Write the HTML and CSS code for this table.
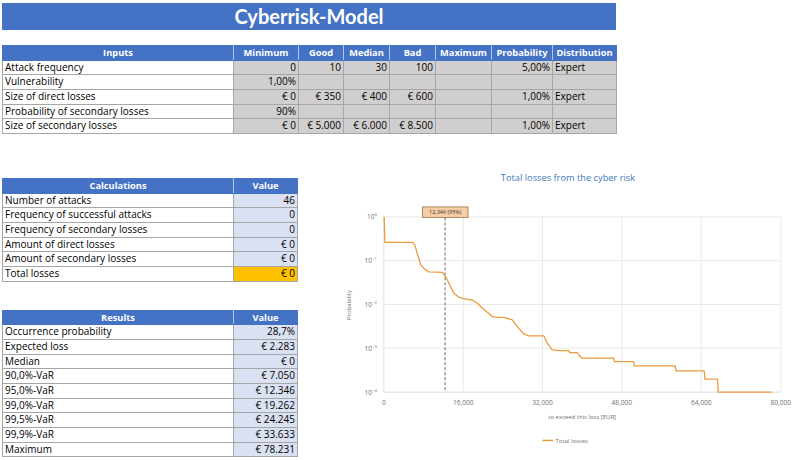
FILE: index.html
```html
<!DOCTYPE html>
<html lang="en">
<head>
<meta charset="utf-8">
<title>Cyberrisk-Model</title>
<link rel="stylesheet" href="styles.css">
</head>
<body>
<div class="sheet">
  <h1 class="title">Cyberrisk-Model</h1>

  <table class="grid inputs">
    <colgroup>
      <col class="w-label"><col style="width:65px"><col style="width:45px"><col style="width:46px"><col style="width:46px"><col style="width:56px"><col style="width:61px"><col style="width:64px">
    </colgroup>
    <thead>
      <tr><th>Inputs</th><th>Minimum</th><th>Good</th><th>Median</th><th>Bad</th><th>Maximum</th><th>Probability</th><th>Distribution</th></tr>
    </thead>
    <tbody>
      <tr><td class="lbl">Attack frequency</td><td class="num">0</td><td class="num">10</td><td class="num">30</td><td class="num">100</td><td class="num"></td><td class="num">5,00%</td><td class="txt">Expert</td></tr>
      <tr><td class="lbl">Vulnerability</td><td class="num">1,00%</td><td class="num"></td><td class="num"></td><td class="num"></td><td class="num"></td><td class="num"></td><td class="txt"></td></tr>
      <tr><td class="lbl">Size of direct losses</td><td class="num">€ 0</td><td class="num">€ 350</td><td class="num">€ 400</td><td class="num">€ 600</td><td class="num"></td><td class="num">1,00%</td><td class="txt">Expert</td></tr>
      <tr><td class="lbl">Probability of secondary losses</td><td class="num">90%</td><td class="num"></td><td class="num"></td><td class="num"></td><td class="num"></td><td class="num"></td><td class="txt"></td></tr>
      <tr><td class="lbl">Size of secondary losses</td><td class="num">€ 0</td><td class="num">€ 5.000</td><td class="num">€ 6.000</td><td class="num">€ 8.500</td><td class="num"></td><td class="num">1,00%</td><td class="txt">Expert</td></tr>
    </tbody>
  </table>

  <div class="lower">
    <div class="left">
      <table class="grid calc">
        <colgroup><col class="w-label"><col class="w-value"></colgroup>
        <thead><tr><th>Calculations</th><th>Value</th></tr></thead>
        <tbody>
          <tr><td class="lbl">Number of attacks</td><td class="val">46</td></tr>
          <tr><td class="lbl">Frequency of successful attacks</td><td class="val">0</td></tr>
          <tr><td class="lbl">Frequency of secondary losses</td><td class="val">0</td></tr>
          <tr><td class="lbl">Amount of direct losses</td><td class="val">€ 0</td></tr>
          <tr><td class="lbl">Amount of secondary losses</td><td class="val">€ 0</td></tr>
          <tr><td class="lbl">Total losses</td><td class="val total">€ 0</td></tr>
        </tbody>
      </table>

      <table class="grid results">
        <colgroup><col class="w-label"><col class="w-value"></colgroup>
        <thead><tr><th>Results</th><th>Value</th></tr></thead>
        <tbody>
          <tr><td class="lbl">Occurrence probability</td><td class="val">28,7%</td></tr>
          <tr><td class="lbl">Expected loss</td><td class="val">€ 2.283</td></tr>
          <tr><td class="lbl">Median</td><td class="val">€ 0</td></tr>
          <tr><td class="lbl">90,0%-VaR</td><td class="val">€ 7.050</td></tr>
          <tr><td class="lbl">95,0%-VaR</td><td class="val">€ 12.346</td></tr>
          <tr><td class="lbl">99,0%-VaR</td><td class="val">€ 19.262</td></tr>
          <tr><td class="lbl">99,5%-VaR</td><td class="val">€ 24.245</td></tr>
          <tr><td class="lbl">99,9%-VaR</td><td class="val">€ 33.633</td></tr>
          <tr><td class="lbl">Maximum</td><td class="val">€ 78.231</td></tr>
        </tbody>
      </table>
    </div>

    <svg class="chart" width="470" height="295" viewBox="0 0 470 295" xmlns="http://www.w3.org/2000/svg">
      <text class="c-title" x="237.5" y="16" text-anchor="middle">Total losses from the cyber risk</text>

      <g class="gridlines">
        <line x1="132.5" y1="51.7" x2="132.5" y2="227.3"/>
        <line x1="212" y1="51.7" x2="212" y2="227.3"/>
        <line x1="291.5" y1="51.7" x2="291.5" y2="227.3"/>
        <line x1="371" y1="51.7" x2="371" y2="227.3"/>
        <line x1="450.7" y1="51.7" x2="450.7" y2="227.3"/>
        <line x1="53" y1="51.7" x2="450.7" y2="51.7"/>
        <line x1="53" y1="95.5" x2="450.7" y2="95.5"/>
        <line x1="53" y1="139.5" x2="450.7" y2="139.5"/>
        <line x1="53" y1="183.3" x2="450.7" y2="183.3"/>
      </g>
      <g class="axes">
        <line x1="53" y1="51.7" x2="53" y2="227.3"/>
        <line x1="53" y1="227.3" x2="450.7" y2="227.3"/>
      </g>

      <g class="ylab" text-anchor="end">
        <text x="46" y="54">10<tspan class="sup" dy="-3">0</tspan></text>
        <text x="46" y="98">10<tspan class="sup" dy="-3">−1</tspan></text>
        <text x="46" y="142">10<tspan class="sup" dy="-3">−2</tspan></text>
        <text x="46" y="186">10<tspan class="sup" dy="-3">−3</tspan></text>
        <text x="46" y="230">10<tspan class="sup" dy="-3">−4</tspan></text>
      </g>
      <g class="xlab" text-anchor="middle">
        <text x="53" y="240">0</text>
        <text x="132.5" y="240">16,000</text>
        <text x="212" y="240">32,000</text>
        <text x="291.5" y="240">48,000</text>
        <text x="371" y="240">64,000</text>
        <text x="450.7" y="240">80,000</text>
      </g>
      <text class="axis-title" x="251.7" y="254" text-anchor="middle">to exceed this loss [EUR]</text>
      <text class="axis-title" transform="translate(20.5 140) rotate(-90)" text-anchor="middle">Probability</text>

      <line class="marker" x1="114.3" y1="52.3" x2="114.3" y2="227.3"/>

      <polyline class="curve" points="53.3,51.7 54,76.7 54,77.3 81.7,77.3 84,80 87,90 90,100 95,105 98,106.7 111.7,107.3 115,111.7 119,120 123.3,128.3 128,132 131.7,133.3 141.7,135 146.7,138.3 151.7,143.3 160,150 161.7,151.7 166.7,152.3 173.3,152.3 181.7,155 186.7,161.7 193.3,169 198.3,171 213.3,171 216.7,178.3 221.7,185 230,185.7 238.3,185.7 239.3,187.7 246.7,187.7 248.3,190 251.7,193.3 283.3,193.3 284,196.7 303.3,196.7 304,201 345,201 345.7,206 374,206 374.7,214.3 387.3,214.3 388,227.3 441.7,227.3"/>

      <rect class="tag" x="91.7" y="41.7" width="45.6" height="10.6"/>
      <text class="tag-text" x="114.5" y="49.2" text-anchor="middle">12,346 (95%)</text>

      <line class="legend-line" x1="211.7" y1="275.7" x2="222.7" y2="275.7"/>
      <text class="legend-text" x="225" y="278">Total losses</text>
    </svg>
  </div>
</div>
</body>
</html>
```

FILE: styles.css
```css
html, body {
  margin: 0;
  padding: 0;
  background: #ffffff;
}

body {
  font-family: "Open Sans", "Lato", "Liberation Sans", sans-serif;
  font-size: 10px;
  color: #000000;
}

.sheet {
  padding: 3px 0 0 2px;
}

.title {
  margin: 0;
  width: 614px;
  height: 27px;
  line-height: 27px;
  background: #4472c4;
  color: #ffffff;
  font-family: "Lato", "Open Sans", sans-serif;
  font-size: 20px;
  font-weight: bold;
  text-align: center;
}

.grid {
  border-collapse: collapse;
  table-layout: fixed;
}

.grid th,
.grid td {
  padding: 0 2px;
  line-height: 13.67px;
  height: 13.67px;
  white-space: nowrap;
  overflow: hidden;
  border: 1px solid #a6a6a6;
}

.grid th {
  background: #4472c4;
  color: #ffffff;
  font-size: 9.3px;
  font-weight: bold;
  text-align: center;
  border-color: #4472c4 #b4c6e7;
}

.grid th:first-child {
  border-left-color: #4472c4;
}

.grid th:last-child {
  border-right-color: #4472c4;
}

.w-label {
  width: 231px;
}

.w-value {
  width: 64px;
}

.inputs {
  width: 614px;
  margin-top: 15px;
}

.lbl {
  text-align: left;
  background: #ffffff;
}

.num {
  text-align: right;
  background: #d0cece;
}

.txt {
  text-align: left;
  background: #d0cece;
}

.val {
  text-align: right;
  background: #dae1f2;
}

.val.total {
  background: #ffc000;
}

.lower {
  display: flex;
  align-items: flex-start;
  margin-top: 31px;
}

.left {
  display: flex;
  flex-direction: column;
  padding-top: 13px;
}

.calc,
.results {
  width: 295px;
}

.results {
  margin-top: 28px;
}

.chart {
  display: block;
  margin-left: 33px;
  font-family: "Open Sans", "Lato", sans-serif;
}

.c-title {
  font-size: 9.3px;
  fill: #3d7bbd;
}

.gridlines line {
  stroke: #e3e3e3;
  stroke-width: 0.8;
}

.axes line {
  stroke: #d4d4d4;
  stroke-width: 0.8;
}

.ylab text,
.xlab text {
  font-size: 6.6px;
  fill: #707070;
}

.ylab .sup {
  font-size: 4.3px;
}

.axis-title {
  font-size: 6px;
  fill: #707070;
}

.marker {
  stroke: #555555;
  stroke-width: 0.9;
  stroke-dasharray: 3 2;
}

.curve {
  fill: none;
  stroke: #ee9a3e;
  stroke-width: 1.3;
  stroke-linejoin: round;
}

.tag {
  fill: #f8cda6;
  stroke: #9a7350;
  stroke-width: 0.8;
}

.tag-text {
  font-size: 5.5px;
  fill: #333333;
}

.legend-line {
  stroke: #ee9a3e;
  stroke-width: 1.5;
}

.legend-text {
  font-size: 6px;
  fill: #707070;
}
```
